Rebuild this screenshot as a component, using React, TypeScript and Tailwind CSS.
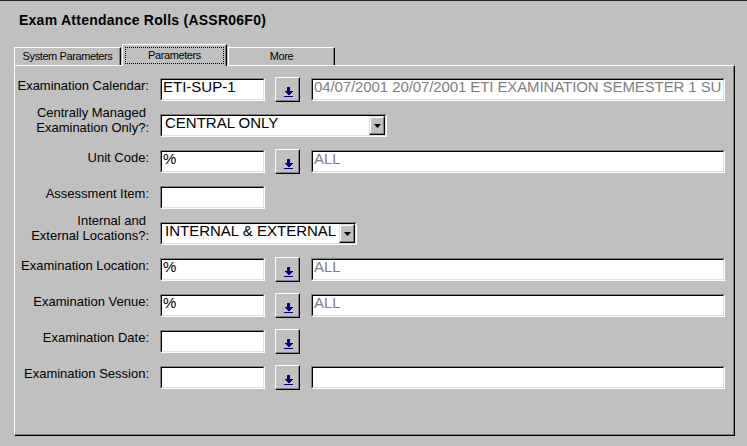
import React from "react";

function Field({
	className,
	children,
	gray,
}: {
	className: string;
	children?: React.ReactNode;
	gray?: boolean;
}) {
	return (
		<div
			className={`${className} h-[23px] shrink-0 border border-t-[#808080] border-l-[#808080] border-r-white border-b-white`}
		>
			<div
				className={`h-full whitespace-nowrap border border-t-black border-l-black border-r-[#dfdfdf] border-b-[#dfdfdf] bg-white pl-[1px] text-[15px] leading-[14px] ${
					gray ? "tracking-[-0.1px] text-[#808080]" : "text-black"
				}`}
			>
				{children}
			</div>
		</div>
	);
}

function Select({ className, value }: { className: string; value: string }) {
	return (
		<div
			className={`${className} h-[23px] shrink-0 border border-t-[#808080] border-l-[#808080] border-r-white border-b-white`}
		>
			<div className="flex h-full border border-t-black border-l-black border-r-[#dfdfdf] border-b-[#dfdfdf] bg-white">
				<div className="flex-1 whitespace-nowrap pl-[3px] text-[15px] leading-[14px] text-black">
					{value}
				</div>
				<div className="flex h-full w-[16px] items-center justify-center border border-t-[#dfdfdf] border-l-[#dfdfdf] border-r-black border-b-black bg-[#c0c0c0] shadow-[inset_-1px_-1px_0_#808080,inset_1px_1px_0_#fff]">
					<svg width="7" height="4" viewBox="0 0 7 4">
						<path d="M0 0h7L3.5 4z" fill="#000" />
					</svg>
				</div>
			</div>
		</div>
	);
}

function LookupButton() {
	return (
		<div className="-mt-[1px] ml-[10px] flex h-[25px] w-[25px] shrink-0 justify-center border border-t-white border-l-white border-r-black border-b-black bg-[#c0c0c0] pl-[2px] pt-[9px] shadow-[inset_-1px_-1px_0_#808080]">
			<svg width="9" height="10" viewBox="0 0 9 10" shapeRendering="crispEdges">
				<rect x="3" y="0" width="3" height="4" fill="#000080" />
				<path d="M0 4h9L4.5 8.5z" fill="#000080" />
				<rect x="0" y="9" width="9" height="1" fill="#000080" />
			</svg>
		</div>
	);
}

function Label({ lines }: { lines: string[] }) {
	if (lines.length === 1) {
		return (
			<div className="w-[135px] shrink-0 pr-[1px] text-right text-[13px] leading-[15px]">
				{lines[0]}
			</div>
		);
	}
	return (
		<div className="-mt-[9px] w-[135px] shrink-0 pr-[1px] text-right text-[13px] leading-[15px]">
			<div className="pr-[3px]">{lines[0]}</div>
			<div>{lines[1]}</div>
		</div>
	);
}

function Row({ children }: { children: React.ReactNode }) {
	return <div className="flex h-[23px] items-start">{children}</div>;
}

export default function App() {
	return (
		<div className="h-[446px] w-[747px] overflow-hidden border-t border-[#202020] bg-[#c0c0c0] font-['Liberation_Sans',Arial,sans-serif] text-black">
			<h1 className="ml-[19px] mt-[11px] text-[14px] font-bold leading-[16px] tracking-[0.25px]">
				Exam Attendance Rolls (ASSR06F0)
			</h1>

			<div className="ml-[14px] mt-[16px] w-[721px]">
				{/* tabs */}
				<div className="flex h-[21px] items-end">
					<div className="flex h-[18px] w-[107px] items-center justify-center border-l border-t border-r border-l-white border-t-white border-r-black text-[11px] leading-[13px] tracking-[-0.4px] shadow-[inset_-1px_0_0_#808080]">
						System Parameters
					</div>
					<div className="relative z-10 -mb-[1px] ml-[1px] h-[22px] w-[105px] border-l border-t border-r border-l-white border-t-white border-r-black bg-[#c0c0c0] p-[2px] pb-0 shadow-[inset_-1px_0_0_#808080]">
						<div className="flex h-[17px] items-center justify-center border border-dotted border-black text-[11px] leading-[13px] tracking-[-0.4px]">
							Parameters
						</div>
					</div>
					<div className="ml-[1px] flex h-[18px] w-[107px] items-center justify-center border-l border-t border-r border-l-white border-t-white border-r-black text-[11px] leading-[13px] tracking-[-0.4px] shadow-[inset_-1px_0_0_#808080]">
						More
					</div>
				</div>

				{/* panel */}
				<div className="flex h-[371px] flex-col gap-[13px] border border-t-white border-l-white border-r-black border-b-black pt-[12px] shadow-[inset_-1px_-1px_0_#808080]">
					<Row>
						<Label lines={["Examination Calendar:"]} />
						<Field className="ml-[10px] w-[105px]">ETI-SUP-1</Field>
						<LookupButton />
						<Field className="ml-[11px] w-[414px]" gray>
							04/07/2001 20/07/2001 ETI EXAMINATION SEMESTER 1 SU
						</Field>
					</Row>
					<Row>
						<Label lines={["Centrally Managed", "Examination Only?:"]} />
						<Select className="ml-[10px] w-[227px]" value="CENTRAL ONLY" />
					</Row>
					<Row>
						<Label lines={["Unit Code:"]} />
						<Field className="ml-[10px] w-[105px]">%</Field>
						<LookupButton />
						<Field className="ml-[11px] w-[414px]" gray>
							ALL
						</Field>
					</Row>
					<Row>
						<Label lines={["Assessment Item:"]} />
						<Field className="ml-[10px] w-[105px]" />
					</Row>
					<Row>
						<Label lines={["Internal and", "External Locations?:"]} />
						<Select className="ml-[10px] w-[197px]" value="INTERNAL & EXTERNAL" />
					</Row>
					<Row>
						<Label lines={["Examination Location:"]} />
						<Field className="ml-[10px] w-[105px]">%</Field>
						<LookupButton />
						<Field className="ml-[11px] w-[414px]" gray>
							ALL
						</Field>
					</Row>
					<Row>
						<Label lines={["Examination Venue:"]} />
						<Field className="ml-[10px] w-[105px]">%</Field>
						<LookupButton />
						<Field className="ml-[11px] w-[414px]" gray>
							ALL
						</Field>
					</Row>
					<Row>
						<Label lines={["Examination Date:"]} />
						<Field className="ml-[10px] w-[105px]" />
						<LookupButton />
					</Row>
					<Row>
						<Label lines={["Examination Session:"]} />
						<Field className="ml-[10px] w-[105px]" />
						<LookupButton />
						<Field className="ml-[11px] w-[414px]" />
					</Row>
				</div>
			</div>
		</div>
	);
}
